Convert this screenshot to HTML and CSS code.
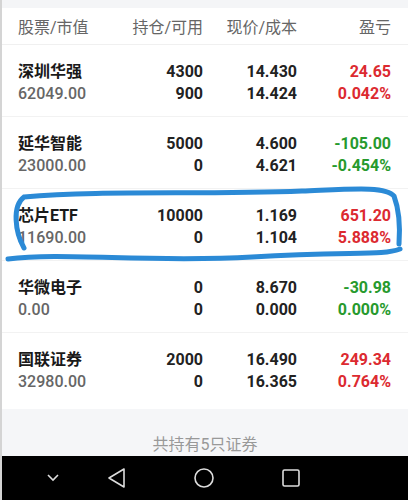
FILE: index.html
```html
<!DOCTYPE html>
<html lang="zh-CN">
<head>
    <meta charset="UTF-8">
    <meta name="viewport" content="width=device-width, initial-scale=1.0">
    <title>持仓</title>
    <link rel="stylesheet" href="styles.css">
</head>
<body>
    <div id="app">
        <div class="top-strip"></div>
        <div class="row header">
            <div class="col name">股票/市值</div>
            <div class="col">持仓/可用</div>
            <div class="col">现价/成本</div>
            <div class="col">盈亏</div>
        </div>

        <div id="positions"></div>

        <div class="footer">共持有5只证券</div>

        <div class="navbar">
            <svg class="nav-icon" width="16" height="10" viewBox="0 0 16 10"><path d="M3 2 L8 7 L13 2" fill="none" stroke="#ddd" stroke-width="1.6"/></svg>
            <svg class="nav-icon" width="20" height="22" viewBox="0 0 20 22"><path d="M2 11 L17 2 L17 20 Z" fill="none" stroke="#ddd" stroke-width="1.6" stroke-linejoin="round"/></svg>
            <svg class="nav-icon" width="22" height="22" viewBox="0 0 22 22"><circle cx="11" cy="11" r="9" fill="none" stroke="#ddd" stroke-width="1.6"/></svg>
            <svg class="nav-icon" width="20" height="20" viewBox="0 0 20 20"><rect x="2" y="2" width="16" height="16" rx="1.5" fill="none" stroke="#ddd" stroke-width="1.6"/></svg>
        </div>

        <svg class="scribble" width="408" height="500" viewBox="0 0 408 500">
            <path d="M6 259 C60 252, 150 263, 250 257 S380 256, 398 249" />
            <path d="M22 248 C13 232, 10 206, 22 197 C100 190, 200 195, 300 191 C350 189, 384 186, 392 196 C398 212, 398 230, 397 244" />
        </svg>
    </div>

    <script>
        const holdings = [
            { name: '深圳华强', value: '62049.00', qty: '4300', avail: '900', price: '14.430', cost: '14.424', pl: '24.65', pct: '0.042%' },
            { name: '延华智能', value: '23000.00', qty: '5000', avail: '0', price: '4.600', cost: '4.621', pl: '-105.00', pct: '-0.454%' },
            { name: '芯片ETF', value: '11690.00', qty: '10000', avail: '0', price: '1.169', cost: '1.104', pl: '651.20', pct: '5.888%' },
            { name: '华微电子', value: '0.00', qty: '0', avail: '0', price: '8.670', cost: '0.000', pl: '-30.98', pct: '0.000%', down: true },
            { name: '国联证券', value: '32980.00', qty: '2000', avail: '0', price: '16.490', cost: '16.365', pl: '249.34', pct: '0.764%' }
        ];

        const list = document.getElementById('positions');
        holdings.forEach(function(h) {
            const down = h.down || h.pl.startsWith('-');
            const row = document.createElement('div');
            row.className = 'row item';
            row.innerHTML =
                `<div class="col name"><div class="title">${h.name}</div><div class="sub">${h.value}</div></div>` +
                `<div class="col"><div>${h.qty}</div><div>${h.avail}</div></div>` +
                `<div class="col"><div>${h.price}</div><div>${h.cost}</div></div>` +
                `<div class="col ${down ? 'down' : 'up'}"><div>${h.pl}</div><div>${h.pct}</div></div>`;
            list.appendChild(row);
        });
    </script>
</body>
</html>
```

FILE: styles.css
```css
body {
    margin: 0;
    background-color: #fff;
    font-family: Roboto, "Noto Sans CJK SC", sans-serif;
}
#app {
    position: relative;
    width: 408px;
    height: 500px;
    display: flex;
    flex-direction: column;
    box-sizing: border-box;
    border-left: 2px solid #d4d4d4;
    overflow: hidden;
}
.top-strip {
    height: 8px;
    background-color: #f4f5f7;
}
.row {
    display: grid;
    grid-template-columns: 100px 85px 94px 94px;
    padding: 0 15px 0 16px;
}
.col {
    text-align: right;
}
.col.name {
    text-align: left;
}
.header {
    height: 36px;
    align-items: center;
    font-size: 16px;
    color: #666;
    border-bottom: 1px solid #f0f0f0;
}
.item {
    height: 72px;
    box-sizing: border-box;
    padding-top: 16px;
    font-size: 16px;
    font-weight: bold;
    line-height: 22px;
    color: #222;
    border-bottom: 1px solid #f2f2f2;
}
.item:last-child {
    border-bottom: none;
    height: 76px;
}
.title {
    font-weight: bold;
    color: #1a1a1a;
}
.sub {
    font-weight: 500;
    color: #666;
}
.up {
    color: #dc2a30;
}
.down {
    color: #279a2d;
}
.footer {
    flex: 1;
    background-color: #f5f6f8;
    display: flex;
    align-items: flex-end;
    justify-content: center;
    padding-bottom: 1px;
    font-size: 16px;
    color: #999;
}
.navbar {
    height: 44px;
    background-color: #000;
    display: flex;
    align-items: center;
    padding-left: 40px;
}
.nav-icon:nth-child(1) { margin-left: 3px; }
.nav-icon:nth-child(2) { margin-left: 46px; }
.nav-icon:nth-child(3) { margin-left: 66px; }
.nav-icon:nth-child(4) { margin-left: 66px; }
.scribble {
    position: absolute;
    left: 0;
    top: 0;
    pointer-events: none;
}
.scribble path {
    fill: none;
    stroke: #2b8ad6;
    stroke-width: 5;
    stroke-linecap: round;
}
```
